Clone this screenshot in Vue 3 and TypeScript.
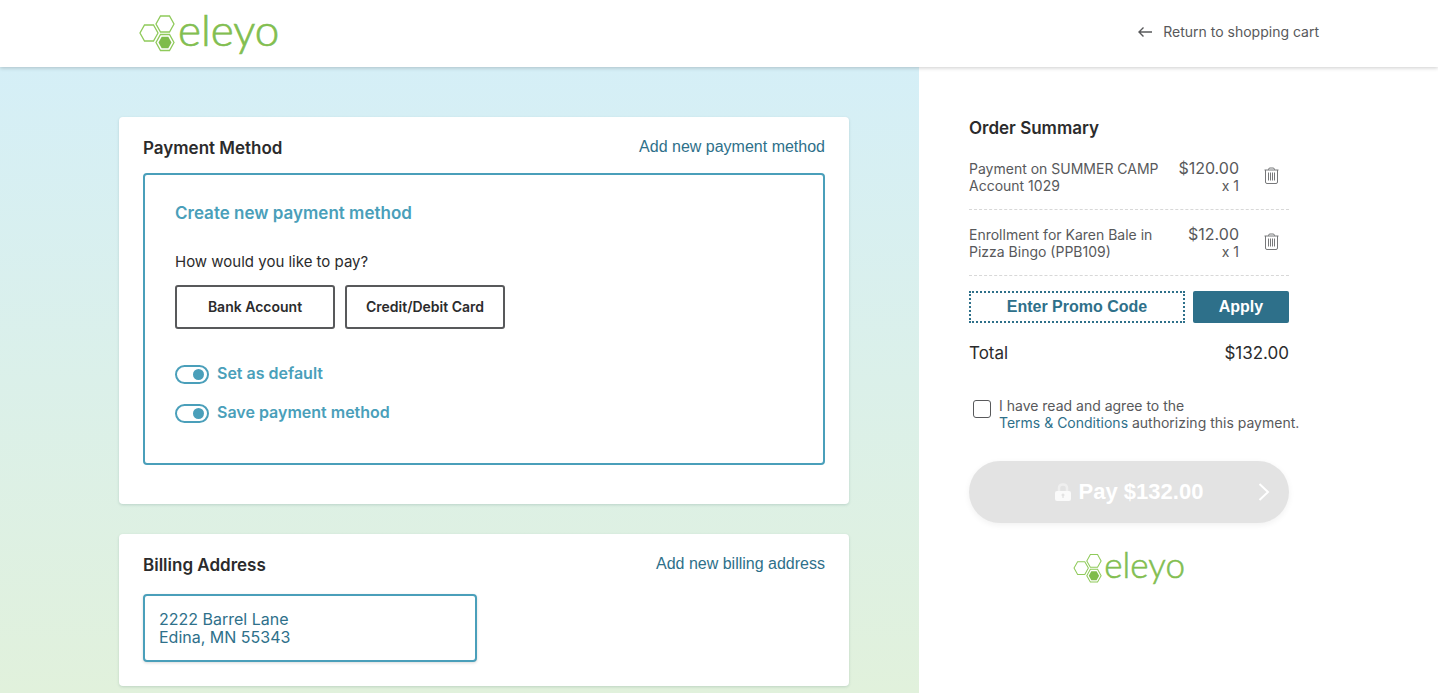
<script setup lang="ts">
import { computed, ref } from 'vue'

interface OrderItem {
  id: number
  title: string
  detail: string
  price: number
  quantity: number
}

const items = ref<OrderItem[]>([
  { id: 1, title: 'Payment on SUMMER CAMP', detail: 'Account 1029', price: 120, quantity: 1 },
  { id: 2, title: 'Enrollment for Karen Bale in', detail: 'Pizza Bingo (PPB109)', price: 12, quantity: 1 },
])

const setDefault = ref(true)
const saveMethod = ref(true)
const agreed = ref(false)
const promo = ref('')

const money = (value: number): string => `$${value.toFixed(2)}`
const total = computed(() => items.value.reduce((sum, item) => sum + item.price * item.quantity, 0))

function removeItem(id: number): void {
  items.value = items.value.filter((item) => item.id !== id)
}
</script>

<template>
  <div class="page">
    <header class="topbar">
      <div class="topbar-inner">
        <a href="#" class="brand" aria-label="eleyo">
          <svg class="logo" viewBox="0 -11 140 59">
            <g class="logo-lines">
              <path d="M35 9 L30.500 17 H21.500 L17 9 L21.500 1 H30.500 Z" />
              <path d="M19 18 L14.500 26 H5.500 L1 18 L5.500 10 H14.500 Z" />
              <path d="M35 27.500 L30.500 35.500 H21.500 L17 27.500 L21.500 19.500 H30.500 Z" />
            </g>
            <path class="logo-fill" d="M32.500 27.500 L29.300 33.200 H22.700 L19.500 27.500 L22.700 21.800 H29.300 Z" />
            <text class="logo-word" x="39" y="31">eleyo</text>
          </svg>
        </a>
        <a href="#" class="return">
          <svg class="arrow" viewBox="0 0 14 12"><path d="M14 6 H1 M5.500 1.500 L1 6 L5.500 10.500" /></svg>
          Return to shopping cart
        </a>
      </div>
    </header>

    <div class="columns">
      <main class="left">
        <section class="card payment">
          <div class="card-head">
            <h2>Payment Method</h2>
            <a href="#">Add new payment method</a>
          </div>
          <div class="method">
            <h3>Create new payment method</h3>
            <p class="question">How would you like to pay?</p>
            <div class="choices">
              <button type="button">Bank Account</button>
              <button type="button">Credit/Debit Card</button>
            </div>
            <label class="toggle"><input v-model="setDefault" type="checkbox" />Set as default</label>
            <label class="toggle"><input v-model="saveMethod" type="checkbox" />Save payment method</label>
          </div>
        </section>

        <section class="card billing">
          <div class="card-head">
            <h2>Billing Address</h2>
            <a href="#">Add new billing address</a>
          </div>
          <button type="button" class="address">2222 Barrel Lane<br />Edina, MN 55343</button>
        </section>
      </main>

      <aside class="right">
        <div class="summary">
          <h2>Order Summary</h2>
          <ul class="items">
            <li v-for="item in items" :key="item.id">
              <div class="item-name">{{ item.title }}<br />{{ item.detail }}</div>
              <div class="item-price">
                <span class="amount">{{ money(item.price) }}</span>
                <span>x {{ item.quantity }}</span>
              </div>
              <button type="button" class="remove" :aria-label="`Remove ${item.title}`" @click="removeItem(item.id)">
                <svg viewBox="0 0 15 17">
                  <path d="M0.500 3 H14.500 M4.500 3 V2.500 Q4.500 1 6 1 H9 Q10.500 1 10.500 2.500 V3 M1.500 3 V15 Q1.500 16.500 3 16.500 H12 Q13.500 16.500 13.500 15 V3" />
                  <path d="M4.500 5.500 V13.500 M6.500 5.500 V13.500 M8.500 5.500 V13.500 M10.500 5.500 V13.500" />
                </svg>
              </button>
            </li>
          </ul>

          <form class="promo" @submit.prevent>
            <input v-model="promo" type="text" placeholder="Enter Promo Code" aria-label="Promo code" />
            <button type="submit">Apply</button>
          </form>

          <div class="total"><span>Total</span><span>{{ money(total) }}</span></div>

          <div class="agree">
            <input id="agree" v-model="agreed" type="checkbox" />
            <div>
              <label for="agree">I have read and agree to the</label><br />
              <a href="#">Terms &amp; Conditions</a> authorizing this payment.
            </div>
          </div>

          <button type="button" class="pay" :disabled="!agreed">
            <svg class="lock" viewBox="0 0 16 18">
              <path class="shackle" d="M4 8 V5 Q4 1.500 8 1.500 Q12 1.500 12 5 V8" />
              <path class="body" fill-rule="evenodd" d="M2 8 H14 Q16 8 16 10 V16 Q16 18 14 18 H2 Q0 18 0 16 V10 Q0 8 2 8 Z M8 10.500 Q6.500 10.500 6.500 12 Q6.500 12.800 7.300 13.300 V15 H8.700 V13.300 Q9.500 12.800 9.500 12 Q9.500 10.500 8 10.500 Z" />
            </svg>
            <span>Pay {{ money(total) }}</span>
            <svg class="chevron" viewBox="0 0 12 18"><path d="M1.500 1 L10 9 L1.500 17" /></svg>
          </button>

          <svg class="logo small" viewBox="0 -11 140 59" role="img" aria-label="eleyo">
            <g class="logo-lines">
              <path d="M35 9 L30.500 17 H21.500 L17 9 L21.500 1 H30.500 Z" />
              <path d="M19 18 L14.500 26 H5.500 L1 18 L5.500 10 H14.500 Z" />
              <path d="M35 27.500 L30.500 35.500 H21.500 L17 27.500 L21.500 19.500 H30.500 Z" />
            </g>
            <path class="logo-fill" d="M32.500 27.500 L29.300 33.200 H22.700 L19.500 27.500 L22.700 21.800 H29.300 Z" />
            <text class="logo-word" x="39" y="31">eleyo</text>
          </svg>
        </div>
      </aside>
    </div>
  </div>
</template>

<style>
body {
  margin: 0;
}
</style>

<style scoped>
.page {
  display: flex;
  flex-direction: column;
  min-height: 100vh;
  background: #fff;
  color: #2b2b2c;
  font-family: Inter, "Liberation Sans", sans-serif;
  font-size: 16px;
}
h2,
h3,
p,
ul {
  margin: 0;
  padding: 0;
}
a {
  color: #2e708a;
  text-decoration: none;
}
button {
  font-family: inherit;
  cursor: pointer;
}
.topbar {
  position: relative;
  background: #fff;
  box-shadow: 0 1px 4px rgba(0, 0, 0, 0.2);
}
.topbar-inner {
  display: flex;
  align-items: center;
  justify-content: space-between;
  box-sizing: border-box;
  max-width: 1200px;
  height: 67px;
  margin: 0 auto;
  padding-left: 20px;
}
.brand {
  display: flex;
}
.logo {
  display: block;
  width: 140px;
  height: 59px;
  overflow: visible;
}
.logo-lines {
  fill: none;
  stroke: #8fca5a;
  stroke-width: 1.300;
}
.logo-fill {
  fill: #7fbc4b;
}
.logo-word {
  fill: #82be50;
  stroke: #82be50;
  stroke-width: 0.700;
  font-family: Lato, sans-serif;
  font-size: 44px;
  font-weight: 300;
}
.return {
  display: flex;
  align-items: center;
  gap: 11px;
  padding-bottom: 3px;
  color: #58595b;
  font-size: 14px;
  line-height: 20px;
}
.arrow {
  width: 14px;
  height: 12px;
  fill: none;
  stroke: #58595b;
  stroke-width: 1.400;
}
.columns {
  display: grid;
  grid-template-columns: calc(50% + 200px) 1fr;
  flex: 1;
}
.left {
  padding: 50px 70px 7px max(20px, calc(50vw - 600px));
  background: linear-gradient(#d5eff7, #e1f1dc);
}
.card {
  padding: 0 24px;
  border-radius: 4px;
  background: #fff;
  box-shadow: 0 1px 3px rgba(0, 60, 60, 0.16);
}
.payment {
  padding-bottom: 39px;
}
.billing {
  margin-top: 30px;
  padding-bottom: 24px;
}
.card-head {
  display: flex;
  align-items: flex-start;
  justify-content: space-between;
  padding: 18px 0 12px;
}
.billing .card-head {
  padding-bottom: 16px;
}
.card-head a {
  font-family: "Liberation Sans", sans-serif;
  line-height: 24px;
}
h2,
h3 {
  font-size: 17px;
  font-weight: 600;
  line-height: 26px;
}
.method {
  padding: 25px 30px 40px;
  border: 2px solid #4a9fba;
  border-radius: 4px;
}
.method h3 {
  color: #4a9fba;
}
.question {
  margin-top: 24px;
  font-size: 15px;
  line-height: 24px;
}
.choices {
  display: flex;
  gap: 10px;
  margin: 11px 0 34px;
}
.choices button {
  width: 160px;
  height: 44px;
  padding: 0 0 2px;
  border: 2px solid #58595b;
  border-radius: 3px;
  background: #fff;
  color: #2b2b2c;
  font-size: 14px;
  font-weight: 600;
}
.toggle {
  display: flex;
  align-items: flex-start;
  gap: 8px;
  width: max-content;
  color: #4a9fba;
  font-weight: 600;
  line-height: 20px;
}
.toggle + .toggle {
  margin-top: 18px;
}
.toggle input {
  display: flex;
  align-items: center;
  appearance: none;
  box-sizing: border-box;
  width: 34px;
  height: 19px;
  margin: 2px 0 0;
  padding: 0 3px;
  border: 2px solid #4a9fba;
  border-radius: 10px;
}
.toggle input::before {
  width: 11px;
  height: 11px;
  border-radius: 50%;
  background: #4a9fba;
  content: "";
}
.toggle input:checked {
  justify-content: flex-end;
}
.address {
  display: block;
  width: 334px;
  max-width: 100%;
  padding: 14px;
  border: 2px solid #4a9fba;
  border-radius: 4px;
  background: #fff;
  box-shadow: 0 1px 3px rgba(0, 0, 0, 0.15);
  color: #2e708a;
  font-size: 16px;
  line-height: 18px;
  text-align: left;
}
.right {
  padding: 50px 20px 20px 50px;
}
.summary {
  max-width: 320px;
  color: #58595b;
  font-size: 14px;
  line-height: 17px;
}
.summary h2 {
  color: #2b2b2c;
  line-height: 22px;
}
.items {
  margin-top: 5px;
  list-style: none;
}
.items li {
  display: flex;
  padding: 16px 0 15px;
  border-bottom: 1px dashed #d8d8d8;
}
.item-name {
  flex: 1;
  white-space: nowrap;
}
.item-price {
  display: flex;
  flex-direction: column;
  align-items: flex-end;
}
.amount {
  font-size: 16px;
}
.remove {
  display: flex;
  align-items: center;
  width: 50px;
  height: 30px;
  padding: 0 10px 0 25px;
  border: 0;
  background: none;
}
.remove svg {
  width: 15px;
  height: 17px;
  fill: none;
  stroke: #77787a;
  stroke-width: 1;
}
.promo {
  display: flex;
  gap: 8px;
  height: 32px;
  margin-top: 15px;
}
.promo input {
  box-sizing: border-box;
  flex: 1;
  min-width: 0;
  padding: 0;
  border: 2px dotted #2e708a;
  color: #2e708a;
  font: bold 16px "Liberation Sans", sans-serif;
  text-align: center;
}
.promo input::placeholder {
  color: #2e708a;
  opacity: 1;
}
.promo button {
  width: 96px;
  padding: 0;
  border: 0;
  border-radius: 2px;
  background: #2e708a;
  color: #fff;
  font: bold 16px "Liberation Sans", sans-serif;
}
.total {
  display: flex;
  justify-content: space-between;
  margin-top: 18px;
  color: #2b2b2c;
  font-size: 17px;
  line-height: 24px;
}
.agree {
  display: flex;
  gap: 8px;
  margin: 32px 0 30px;
  padding-left: 4px;
  white-space: nowrap;
}
.agree input {
  appearance: none;
  flex: none;
  box-sizing: border-box;
  width: 18px;
  height: 18px;
  margin: 3px 0 0;
  border: 1px solid #58595b;
  border-radius: 3px;
}
.agree input:checked {
  background: #2e708a;
}
.pay {
  position: relative;
  display: flex;
  align-items: center;
  justify-content: center;
  gap: 8px;
  width: 100%;
  height: 62px;
  border: 0;
  border-radius: 31px;
  background: #e3e3e3;
  box-shadow: 0 2px 6px rgba(0, 0, 0, 0.06);
  color: #fff;
  font: bold 22px "Liberation Sans", sans-serif;
}
.lock {
  width: 16px;
  height: 18px;
}
.lock .body {
  fill: #fafafa;
}
.lock .shackle {
  fill: none;
  stroke: #efefef;
  stroke-width: 2.500;
}
.chevron {
  position: absolute;
  right: 19px;
  width: 12px;
  height: 18px;
  fill: none;
  stroke: #fff;
  stroke-width: 2;
}
.logo.small {
  width: 112px;
  height: 47px;
  margin: 22px auto 0;
}
</style>
